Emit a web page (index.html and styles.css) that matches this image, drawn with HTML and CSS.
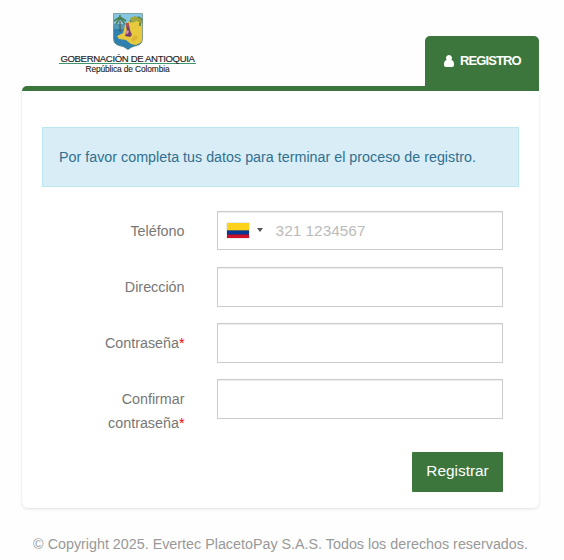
FILE: index.html
```html
<!DOCTYPE html>
<html lang="es">
<head>
<meta charset="utf-8">
<title>Registro</title>
<link rel="stylesheet" href="styles.css">
</head>
<body>
<div class="page">
  <header class="header">
    <div class="brand">
      <svg class="shield" viewBox="0 0 30 37" aria-hidden="true">
        <defs><clipPath id="shield-shape"><path d="M.5.5h29v25q0 5-4 6.500L19 34l-4 2.500-4-2.500-6.500-2Q.5 30.500.5 25.500z"/></clipPath></defs>
        <g clip-path="url(#shield-shape)">
          <path fill="#85c7e2" d="M0 0h30v37H0z"/>
          <path fill="#2f80ae" d="M0 15h13l-2 8 8 8-4 6H0z"/>
          <path fill="#519bb9" d="M0 11h14v5H0z"/>
          <path fill="#2f80ae" d="M14 28h16v9H12z"/>
          <path fill="#e6c93c" d="M12 12l4-4 3 2 4-4 8 2v20l-8 4-5-1-5-4-7-1-2-3 6-3z"/>
          <path fill="#dcb334" d="M18 26l5-4 2 3-5 4z"/>
          <path fill="none" stroke="#684b32" d="M7 8v11"/>
          <path fill="none" stroke="#4b7f55" stroke-width="1.600" d="M1 8l6-4 6 4M3 11l4-6 5 6M7 2v5M17 9q3-5 7-3M22 6q5-5 8 4M23 7q5-1 4 6"/>
          <path fill="#a0a63e" d="M17 5l5-2 6 3 1 5-5-3-5 2z"/>
          <path fill="#783f70" d="M13 13l3-1 1 5 2 5-2 2-5-1 2-5z"/>
          <path fill="#b55249" d="M13 10h3v3l-3 1z"/>
          <path fill="#d59496" d="M13 17l3 1-1 3-3-1z"/>
        </g>
        <path fill="none" stroke="#658783" stroke-width=".7" d="M.5.5h29v25q0 5-4 6.500L19 34l-4 2.500-4-2.500-6.500-2Q.5 30.500.5 25.500z"/>
      </svg>
      <div class="brand-name">GOBERNACIÓN DE ANTIOQUIA</div>
      <div class="brand-country">República de Colombia</div>
    </div>
    <div class="tab">
      <svg class="user" viewBox="0 0 10 12" aria-hidden="true"><path fill="#fff" d="M5 0a3.100 3.100 0 0 1 2.300 5.100C9.400 5.300 10 7.300 10 9.800 10 11.200 9.200 12 8 12H2C.8 12 0 11.200 0 9.800 0 7.300.6 5.300 2.700 5.100A3.100 3.100 0 0 1 5 0z"/></svg>
      <span>REGISTRO</span>
    </div>
  </header>
  <main class="card">
    <div class="alert">Por favor completa tus datos para terminar el proceso de registro.</div>
    <form class="form">
      <div class="row">
        <label for="phone">Teléfono</label>
        <div class="control phone">
          <span class="flag"></span><span class="caret"></span>
          <input id="phone" type="tel" placeholder="321 1234567">
        </div>
      </div>
      <div class="row"><label for="address">Dirección</label><input class="control" id="address" type="text"></div>
      <div class="row"><label for="password">Contraseña<b>*</b></label><input class="control" id="password" type="password"></div>
      <div class="row"><label for="confirm">Confirmar contraseña<b>*</b></label><input class="control" id="confirm" type="password"></div>
      <button class="submit" type="button">Registrar</button>
    </form>
  </main>
  <footer class="footer">© Copyright 2025. Evertec PlacetoPay S.A.S. Todos los derechos reservados.</footer>
</div>
</body>
</html>
```
FILE: styles.css
```css
* { box-sizing: border-box; }
body {
  margin: 0;
  background: #fefefe;
  color: #777;
  font: 14.32px/24px "Liberation Sans", Arial, sans-serif;
  overflow: hidden;
}
.page { width: 517px; margin-left: 22px; }
.header {
  height: 86px;
  display: flex;
  justify-content: space-between;
  align-items: flex-end;
}
.brand {
  width: 137px;
  height: 73px;
  margin-left: 37px;
  display: flex;
  flex-direction: column;
  align-items: center;
  color: #222;
  white-space: nowrap;
}
.shield { width: 30px; height: 37px; display: block; flex: none; }
.brand-name {
  width: 137px;
  height: 14px;
  border-bottom: 1px solid #3f956d;
  font-size: 9.6px;
  line-height: 18px;
  letter-spacing: -.36px;
  display: flex;
  justify-content: center;
  -webkit-text-stroke: .15px #222;
}
.brand-country {
  font-size: 8.4px;
  line-height: 9px;
  margin-top: 1px;
  letter-spacing: -.12px;
  -webkit-text-stroke: .1px #222;
}
.tab {
  width: 114px;
  height: 50px;
  padding: 0 18px 0 19px;
  display: flex;
  align-items: center;
  gap: 6px;
  border-radius: 5px 5px 0 0;
  background: #3c763d;
  color: #fff;
  font-size: 13px;
  font-weight: bold;
  letter-spacing: -.9px;
}
.user { width: 10px; height: 12px; flex: none; }
.card {
  height: 422px;
  padding: 36px 20px 0;
  border-top: 5px solid #3c763d;
  border-radius: 5px 0 6px 6px;
  background: #fff;
  box-shadow: 0 1px 3px rgba(0, 0, 0, .12);
}
.alert {
  height: 60px;
  padding: 17px 16px;
  border: 1px solid #bce8f1;
  background: #d9edf7;
  color: #31708f;
  white-space: nowrap;
}
.form {
  display: flex;
  flex-direction: column;
  margin-top: 24px;
  padding-right: 16px;
}
.row {
  height: 56px;
  display: grid;
  grid-template-columns: 142.500px 286px;
  column-gap: 32.500px;
}
label { padding: 8px 0 0 50px; text-align: right; }
label b { color: #f00; font-weight: normal; }
.control {
  width: 286px;
  height: 40px;
  border: 1px solid #ccc;
  border-radius: 0;
  background: #fff;
  box-shadow: inset 0 1px 1px rgba(0, 0, 0, .075);
}
.phone {
  height: 39px;
  display: flex;
  align-items: center;
  padding-left: 9px;
}
.flag {
  width: 22px;
  height: 15px;
  background: linear-gradient(#ffd21a 0 7px, #596a5c 7px 8px, #063896 8px 11px, #5d2257 11px 12px, #cf1029 12px);
  box-shadow: 0 0 1px #888;
}
.caret {
  margin: 0 12.600px 2px 8px;
  border: 3px solid transparent;
  border-top: 4px solid #555;
  border-bottom: 0;
}
.phone input {
  width: 200px;
  padding: 0;
  border: 0;
  background: none;
  font: 15.4px/24px "Liberation Sans", Arial, sans-serif;
}
.phone input::placeholder { color: #bbb; opacity: 1; }
.submit {
  width: 91px;
  height: 40px;
  margin-top: 17px;
  padding: 0 0 2px;
  align-self: flex-end;
  border: 0;
  border-radius: 1px;
  background: #3c763d;
  color: #fff;
  font: 15.4px/24px "Liberation Sans", Arial, sans-serif;
}
.footer {
  margin-top: 24px;
  text-align: center;
  color: #999;
  white-space: nowrap;
}
```
